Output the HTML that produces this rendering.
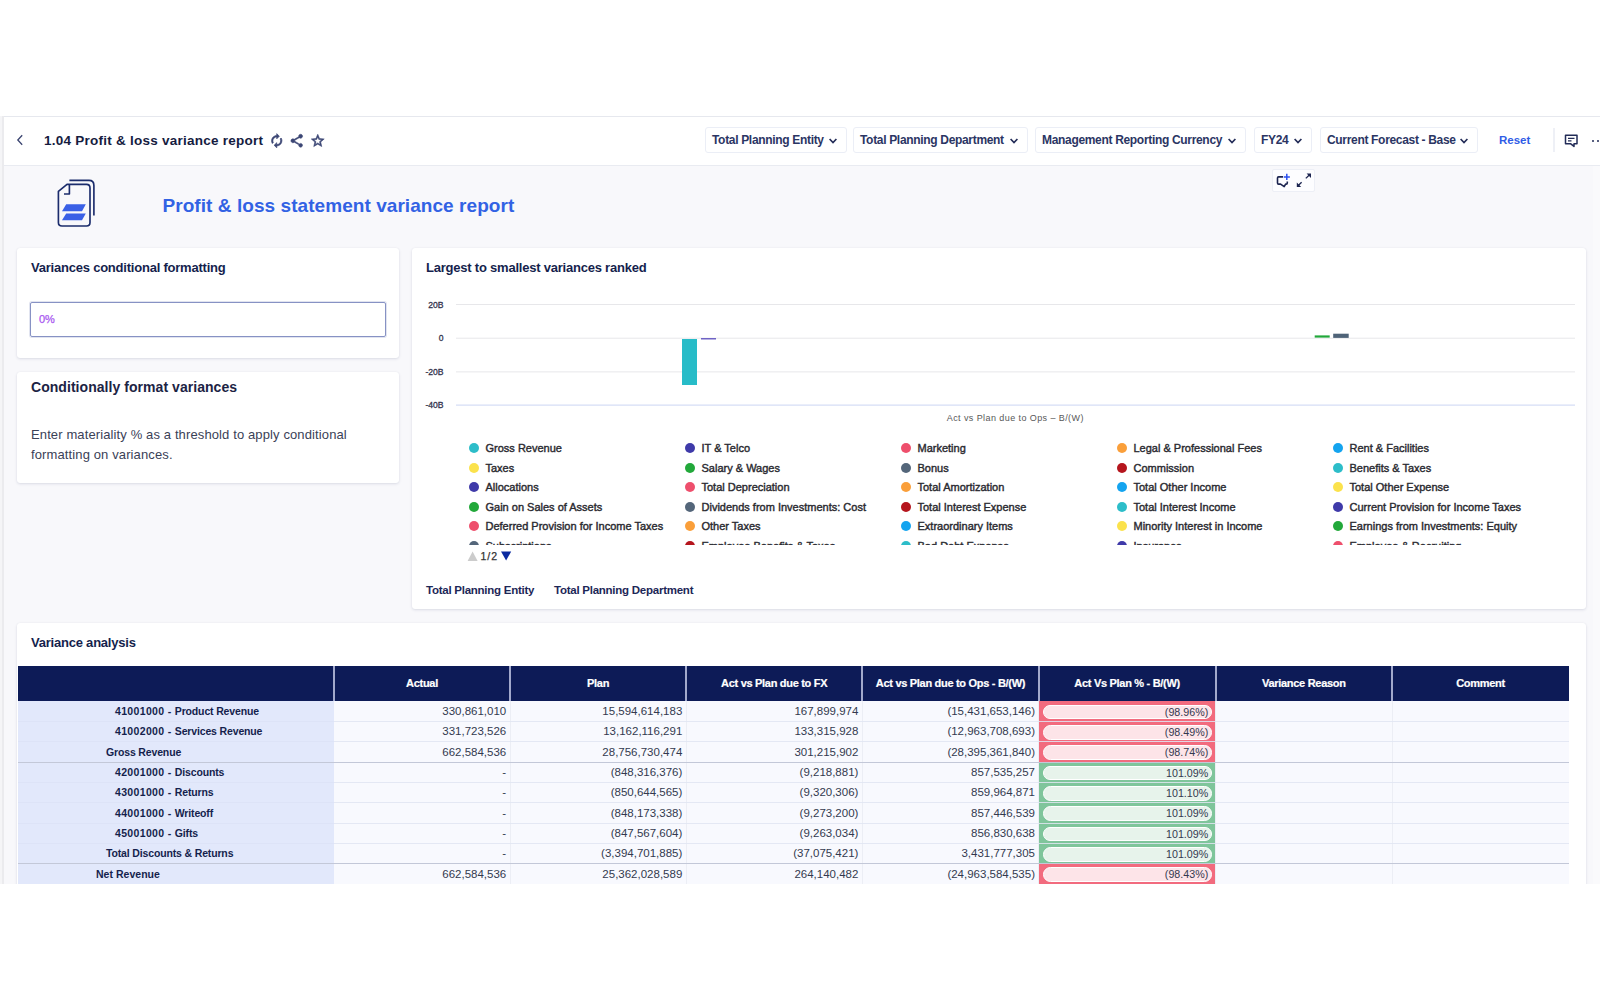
<!DOCTYPE html><html><head><meta charset="utf-8"><title>1.04 Profit &amp; loss variance report</title><style>
*{box-sizing:border-box;margin:0;padding:0}
html,body{width:1600px;height:1000px;overflow:hidden;background:#fff}
body{font-family:"Liberation Sans",sans-serif;color:#151f4d;position:relative}
.abs{position:absolute}
.t{position:absolute;white-space:nowrap;line-height:1}
#app{position:absolute;left:0;top:116px;width:1600px;height:768px;background:#f8f8fb;overflow:hidden}
#bar{position:absolute;left:0;top:0;width:1600px;height:50px;background:#fff;border-top:1px solid #e6e8ee;border-bottom:1px solid #e9ebf1}
#strip{position:absolute;left:0;top:0;width:4px;height:768px;z-index:5;background:linear-gradient(90deg,#f5f5f7 0,#f5f5f7 2px,#ebebee 2px,#ebebee 4px)}
.flt{position:absolute;top:10.4px;height:25.8px;border:1px solid #ebeef6;border-radius:3px;background:#fff;font-size:12px;font-weight:bold;color:#2b3563;line-height:25.4px;padding-left:6px;white-space:nowrap;letter-spacing:-.32px}
.card{position:absolute;background:#fff;border-radius:3px;box-shadow:0 1px 3px rgba(30,40,90,.13),0 0 1px rgba(30,40,90,.08)}
.ct{position:absolute;left:14px;font-weight:bold;font-size:13px;white-space:nowrap;line-height:1;color:#151f4d;letter-spacing:-.22px}
.lg{position:absolute;font-size:11px;color:#2a2a30;white-space:nowrap;line-height:1;-webkit-text-stroke:.4px #2a2a30}
.dot{position:absolute;width:10px;height:10px;border-radius:50%}
.th{position:absolute;top:0;height:35px;color:#fff;font-weight:bold;font-size:11px;text-align:center;line-height:34px;white-space:nowrap;letter-spacing:-.3px;-webkit-text-stroke:.2px #fff}
.rh{position:absolute;left:18px;width:316px;background:#e2e8fb;font-weight:bold;font-size:10.5px;line-height:21.4px;white-space:nowrap;color:#151f4d;letter-spacing:.03px}
.td{position:absolute;background:#f8f9fe;font-size:11.5px;text-align:right;padding-right:3.8px;line-height:20.6px;color:#33394f;white-space:nowrap}
.pill{position:absolute;left:4px;right:3.1px;top:3.8px;height:14.7px;border-radius:7.4px;border:1px solid #fff;font-size:10.7px;line-height:13.4px;text-align:right;padding-right:2.4px;color:#33394f}
</style></head><body>
<div id="app">
<div id="strip"></div>
<div class="abs" style="left:1593px;top:50px;width:7px;height:718px;background:#fafafc"></div>
<div id="bar">
<svg class="abs" style="left:16px;top:17px" width="8" height="12" viewBox="0 0 8 12"><path d="M6.2 1.2 L1.8 6 L6.2 10.8" fill="none" stroke="#3a4470" stroke-width="1.3"/></svg>
<div class="t" id="ttl" style="left:44px;top:17px;font-size:13.5px;font-weight:bold;color:#151c3f;letter-spacing:.25px">1.04 Profit &amp; loss variance report</div>
<svg class="abs" style="left:269px;top:15.8px" width="15.5" height="15.5" viewBox="0 0 24 24"><path fill="#3b4674" stroke="#3b4674" stroke-width="1.1" d="M12 6v3l4-4-4-4v3c-4.42 0-8 3.58-8 8 0 1.57.46 3.03 1.24 4.26L6.7 14.8c-.45-.83-.7-1.79-.7-2.8 0-3.31 2.69-6 6-6zm6.76 1.74L17.3 9.2c.44.84.7 1.79.7 2.8 0 3.31-2.69 6-6 6v-3l-4 4 4 4v-3c4.42 0 8-3.58 8-8 0-1.57-.46-3.03-1.24-4.26z"/></svg>
<svg class="abs" style="left:289.2px;top:15.5px" width="15.5" height="15.5" viewBox="0 0 24 24"><path fill="#3b4674" stroke="#3b4674" stroke-width=".9" d="M18 16.08c-.76 0-1.44.3-1.96.77L8.91 12.7c.05-.23.09-.46.09-.7s-.04-.47-.09-.7l7.05-4.11c.54.5 1.25.81 2.04.81 1.66 0 3-1.34 3-3s-1.34-3-3-3-3 1.34-3 3c0 .24.04.47.09.7L8.04 9.81C7.5 9.31 6.79 9 6 9c-1.66 0-3 1.34-3 3s1.34 3 3 3c.79 0 1.5-.31 2.04-.81l7.12 4.16c-.05.21-.08.43-.08.65 0 1.61 1.31 2.92 2.92 2.92 1.61 0 2.92-1.31 2.92-2.92s-1.31-2.92-2.92-2.92z"/></svg>
<svg class="abs" style="left:309.5px;top:15.8px" width="15.5" height="15.5" viewBox="0 0 24 24"><path fill="#3b4674" stroke="#3b4674" stroke-width=".9" d="M22 9.24l-7.19-.62L12 2 9.19 8.63 2 9.24l5.46 4.73L5.82 21 12 17.27 18.18 21l-1.63-7.03L22 9.24zM12 15.4l-3.76 2.27 1-4.28-3.32-2.88 4.38-.38L12 6.1l1.71 4.04 4.38.38-3.32 2.88 1 4.28L12 15.4z"/></svg>
<div class="flt" style="left:705px;width:142px">Total Planning Entity<svg style="position:absolute;right:9px;top:9.6px" width="8" height="6" viewBox="0 0 8 6"><path d="M0.6 1 L4 4.6 L7.4 1" fill="none" stroke="#232c58" stroke-width="1.7"/></svg></div>
<div class="flt" style="left:853px;width:175px">Total Planning Department<svg style="position:absolute;right:9px;top:9.6px" width="8" height="6" viewBox="0 0 8 6"><path d="M0.6 1 L4 4.6 L7.4 1" fill="none" stroke="#232c58" stroke-width="1.7"/></svg></div>
<div class="flt" style="left:1035px;width:211px">Management Reporting Currency<svg style="position:absolute;right:9px;top:9.6px" width="8" height="6" viewBox="0 0 8 6"><path d="M0.6 1 L4 4.6 L7.4 1" fill="none" stroke="#232c58" stroke-width="1.7"/></svg></div>
<div class="flt" style="left:1254px;width:58px">FY24<svg style="position:absolute;right:9px;top:9.6px" width="8" height="6" viewBox="0 0 8 6"><path d="M0.6 1 L4 4.6 L7.4 1" fill="none" stroke="#232c58" stroke-width="1.7"/></svg></div>
<div class="flt" style="left:1320px;width:158px">Current Forecast - Base<svg style="position:absolute;right:9px;top:9.6px" width="8" height="6" viewBox="0 0 8 6"><path d="M0.6 1 L4 4.6 L7.4 1" fill="none" stroke="#232c58" stroke-width="1.7"/></svg></div>
<div class="t" style="left:1499px;top:18px;font-size:11.5px;font-weight:bold;color:#2f5ce6">Reset</div>
<div class="abs" style="left:1552.6px;top:11px;width:2px;height:24px;background:#eef0f6"></div>
<svg class="abs" style="left:1564px;top:17px" width="15" height="14" viewBox="0 0 15 14"><path d="M1.5 1.2 H13 V9.8 H10 V12.4 L6.8 9.8 H1.5 Z" fill="none" stroke="#222c57" stroke-width="1.5" stroke-linejoin="round"/><path d="M4 4.3 H10.5 M4 6.8 H7.5" stroke="#222c57" stroke-width="1.3"/></svg>
<div class="abs" style="left:1592px;top:23px;width:2.4px;height:2.4px;border-radius:50%;background:#222c57"></div><div class="abs" style="left:1597px;top:23px;width:2.4px;height:2.4px;border-radius:50%;background:#222c57"></div>
</div>
<svg class="abs" style="left:50px;top:60px" width="50" height="56" viewBox="50 176 50 56"><g fill="none" stroke="#1b2c6c" stroke-width="1.65" stroke-linejoin="round" stroke-linecap="butt"><path d="M67 184.4 H86.5 Q90 184.4 90 188 V222.5 Q90 226 86.5 226 H62 Q58.4 226 58.4 222.5 V191.4 Z"/><path d="M69.4 184.4 V194 H64"/><path d="M69.4 180.4 H89 Q93.9 180.4 93.9 185.5 V215.6"/></g><path d="M66.2 204.3 H85.8 L82 211.2 H62 Z" fill="#3a60e6"/><path d="M66.2 213.5 H85.8 L82 220.3 H62 Z" fill="#3a60e6"/></svg>
<div class="t" id="h1" style="left:162.5px;top:79.8px;font-size:19px;font-weight:bold;color:#3262e4;letter-spacing:.06px">Profit &amp; loss statement variance report</div>
<div class="abs" style="left:1272.2px;top:53px;width:43px;height:22.5px;background:#fdfdff;border:1px solid #edeff6;border-radius:2px"></div>
<svg class="abs" style="left:1272px;top:54px" width="44" height="22" viewBox="1272 170 44 22"><path d="M1283 176.9 H1278.6 Q1277.5 176.9 1277.5 178 V183 Q1277.5 184.1 1278.6 184.1 H1280.6 L1284.2 186.6 L1285.6 184.1 H1286.2 Q1287.3 184.1 1287.3 183 V181.6" fill="none" stroke="#1c2450" stroke-width="1.6" stroke-linejoin="round"/><path d="M1286.8 173.8 V180 M1283.7 176.9 H1289.9" stroke="#2b50f0" stroke-width="1.5"/><g stroke="#1c2450" stroke-width="1.3" fill="none"><path d="M1305.8 178.4 L1309.6 174.8"/><path d="M1301.6 182.2 L1298 185.8"/></g><path d="M1306.6 173.6 H1311 V178 Z" fill="#1c2450"/><path d="M1296.8 182.6 V187 H1301.2 Z" fill="#1c2450"/></svg>
<div class="card" style="left:17px;top:131.5px;width:382.2px;height:110px"><div class="ct" style="top:13.5px">Variances conditional formatting</div><div class="abs" style="left:12.5px;top:54.8px;width:356.5px;height:34.6px;border:1px solid #8792c4;border-radius:2px;box-shadow:0 0 0 1px rgba(135,146,196,.25)"><div class="t" style="left:8.5px;top:10.6px;font-size:11px;color:#a855f0;-webkit-text-stroke:.25px #a855f0">0%</div></div></div>
<div class="card" style="left:17px;top:255.6px;width:382.2px;height:111.2px"><div class="t" style="left:14px;top:8.4px;font-size:14px;font-weight:bold;color:#1c2344;letter-spacing:.05px">Conditionally format variances</div><div class="abs" style="left:14px;top:53.4px;font-size:13px;line-height:19.8px;color:#3a4157;white-space:nowrap;letter-spacing:.12px">Enter materiality % as a threshold to apply conditional<br>formatting on variances.</div></div>
<div class="card" style="left:412px;top:131.5px;width:1173.6px;height:361.3px"><div class="ct" style="top:13.5px">Largest to smallest variances ranked</div></div>
<svg class="abs" style="left:412px;top:170px" width="1173" height="150" viewBox="412 286 1173 150" font-family="Liberation Sans, sans-serif">
<path d="M456 304.5 H1575" stroke="#e7e7ea" stroke-width="1"/>
<path d="M456 338.2 H1575" stroke="#e7e7ea" stroke-width="1"/>
<path d="M456 371.9 H1575" stroke="#e7e7ea" stroke-width="1"/>
<path d="M456 405.1 H1575" stroke="#ccd6f3" stroke-width="1"/>
<text x="443.6" y="307.7" text-anchor="end" font-size="8.6" fill="#33334d" stroke="#33334d" stroke-width=".3">20B</text>
<text x="443.6" y="341.3" text-anchor="end" font-size="8.6" fill="#33334d" stroke="#33334d" stroke-width=".3">0</text>
<text x="443.6" y="375" text-anchor="end" font-size="8.6" fill="#33334d" stroke="#33334d" stroke-width=".3">-20B</text>
<text x="443.6" y="408.2" text-anchor="end" font-size="8.6" fill="#33334d" stroke="#33334d" stroke-width=".3">-40B</text>
<rect x="682" y="339" width="15" height="46" fill="#27bcc8"/><rect x="701" y="338" width="15" height="1.5" fill="#6f63c5"/><rect x="1314.7" y="335.4" width="15" height="2.2" fill="#22a83a"/><rect x="1333.2" y="333.7" width="15.5" height="4.2" fill="#4f6378"/>
<text x="1015.3" y="420.8" text-anchor="middle" font-size="9" letter-spacing=".42" fill="#585858">Act vs Plan due to Ops – B/(W)</text>
</svg>
<div class="abs" style="left:412px;top:320px;width:1173px;height:109px;overflow:hidden">
<div class="dot" style="left:57.2px;top:7.2px;background:#2dbdc9"></div><div class="lg" style="left:73.5px;top:7.2px">Gross Revenue</div>
<div class="dot" style="left:273.2px;top:7.2px;background:#3f3aa9"></div><div class="lg" style="left:289.5px;top:7.2px">IT &amp; Telco</div>
<div class="dot" style="left:489.2px;top:7.2px;background:#ee4f6c"></div><div class="lg" style="left:505.5px;top:7.2px">Marketing</div>
<div class="dot" style="left:705.2px;top:7.2px;background:#fa9f3a"></div><div class="lg" style="left:721.5px;top:7.2px">Legal &amp; Professional Fees</div>
<div class="dot" style="left:921.2px;top:7.2px;background:#14a4ef"></div><div class="lg" style="left:937.5px;top:7.2px">Rent &amp; Facilities</div>
<div class="dot" style="left:57.2px;top:26.6px;background:#fbe24c"></div><div class="lg" style="left:73.5px;top:26.6px">Taxes</div>
<div class="dot" style="left:273.2px;top:26.6px;background:#22a83a"></div><div class="lg" style="left:289.5px;top:26.6px">Salary &amp; Wages</div>
<div class="dot" style="left:489.2px;top:26.6px;background:#54667a"></div><div class="lg" style="left:505.5px;top:26.6px">Bonus</div>
<div class="dot" style="left:705.2px;top:26.6px;background:#b5151d"></div><div class="lg" style="left:721.5px;top:26.6px">Commission</div>
<div class="dot" style="left:921.2px;top:26.6px;background:#2dbdc9"></div><div class="lg" style="left:937.5px;top:26.6px">Benefits &amp; Taxes</div>
<div class="dot" style="left:57.2px;top:46.1px;background:#3f3aa9"></div><div class="lg" style="left:73.5px;top:46.1px">Allocations</div>
<div class="dot" style="left:273.2px;top:46.1px;background:#ee4f6c"></div><div class="lg" style="left:289.5px;top:46.1px">Total Depreciation</div>
<div class="dot" style="left:489.2px;top:46.1px;background:#fa9f3a"></div><div class="lg" style="left:505.5px;top:46.1px">Total Amortization</div>
<div class="dot" style="left:705.2px;top:46.1px;background:#14a4ef"></div><div class="lg" style="left:721.5px;top:46.1px">Total Other Income</div>
<div class="dot" style="left:921.2px;top:46.1px;background:#fbe24c"></div><div class="lg" style="left:937.5px;top:46.1px">Total Other Expense</div>
<div class="dot" style="left:57.2px;top:65.5px;background:#22a83a"></div><div class="lg" style="left:73.5px;top:65.5px">Gain on Sales of Assets</div>
<div class="dot" style="left:273.2px;top:65.5px;background:#54667a"></div><div class="lg" style="left:289.5px;top:65.5px">Dividends from Investments: Cost</div>
<div class="dot" style="left:489.2px;top:65.5px;background:#b5151d"></div><div class="lg" style="left:505.5px;top:65.5px">Total Interest Expense</div>
<div class="dot" style="left:705.2px;top:65.5px;background:#2dbdc9"></div><div class="lg" style="left:721.5px;top:65.5px">Total Interest Income</div>
<div class="dot" style="left:921.2px;top:65.5px;background:#3f3aa9"></div><div class="lg" style="left:937.5px;top:65.5px">Current Provision for Income Taxes</div>
<div class="dot" style="left:57.2px;top:85.0px;background:#ee4f6c"></div><div class="lg" style="left:73.5px;top:85.0px">Deferred Provision for Income Taxes</div>
<div class="dot" style="left:273.2px;top:85.0px;background:#fa9f3a"></div><div class="lg" style="left:289.5px;top:85.0px">Other Taxes</div>
<div class="dot" style="left:489.2px;top:85.0px;background:#14a4ef"></div><div class="lg" style="left:505.5px;top:85.0px">Extraordinary Items</div>
<div class="dot" style="left:705.2px;top:85.0px;background:#fbe24c"></div><div class="lg" style="left:721.5px;top:85.0px">Minority Interest in Income</div>
<div class="dot" style="left:921.2px;top:85.0px;background:#22a83a"></div><div class="lg" style="left:937.5px;top:85.0px">Earnings from Investments: Equity</div>
<div class="dot" style="left:57.2px;top:104.5px;background:#54667a"></div><div class="lg" style="left:73.5px;top:104.5px">Subscriptions</div>
<div class="dot" style="left:273.2px;top:104.5px;background:#b5151d"></div><div class="lg" style="left:289.5px;top:104.5px">Employee Benefits &amp; Taxes</div>
<div class="dot" style="left:489.2px;top:104.5px;background:#2dbdc9"></div><div class="lg" style="left:505.5px;top:104.5px">Bad Debt Expense</div>
<div class="dot" style="left:705.2px;top:104.5px;background:#3f3aa9"></div><div class="lg" style="left:721.5px;top:104.5px">Insurance</div>
<div class="dot" style="left:921.2px;top:104.5px;background:#ee4f6c"></div><div class="lg" style="left:937.5px;top:104.5px">Employee &amp; Recruiting</div>
</div>
<svg class="abs" style="left:466px;top:434px" width="50" height="13" viewBox="466 550 50 13" font-family="Liberation Sans, sans-serif"><path d="M467.6 561 L472.6 551.6 L477.6 561 Z" fill="#cccccc"/><text x="480.4" y="559.6" font-size="10.5" fill="#333" letter-spacing="1.1" stroke="#333" stroke-width=".25">1/2</text><path d="M501 551.4 L511.2 551.4 L506.1 560.6 Z" fill="#0a2aa0"/></svg>
<div class="t" style="left:426px;top:468.5px;font-size:11.5px;font-weight:bold;color:#1d2757;letter-spacing:-.25px">Total Planning Entity</div>
<div class="t" style="left:554px;top:468.5px;font-size:11.5px;font-weight:bold;color:#1d2757;letter-spacing:-.25px">Total Planning Department</div>
<div class="card" style="left:17px;top:506.8px;width:1568.8px;height:280px;border-radius:3px 3px 0 0"><div class="ct" style="top:13.2px">Variance analysis</div></div>
<div class="abs" id="tbl" style="left:0;top:550px;width:1600px;height:218px;overflow:hidden">
<div class="abs" style="left:18px;top:0;width:1550.75px;height:34.9px;background:#0d1b57"></div>
<div class="abs" style="left:333px;top:0;width:2px;height:34.9px;background:#a2a9cc"></div>
<div class="th" style="left:334.00px;width:176.00px">Actual</div>
<div class="abs" style="left:509px;top:0;width:2px;height:34.9px;background:#a2a9cc"></div>
<div class="th" style="left:510.00px;width:176.10px">Plan</div>
<div class="abs" style="left:685px;top:0;width:2px;height:34.9px;background:#a2a9cc"></div>
<div class="th" style="left:686.10px;width:176.10px">Act vs Plan due to FX</div>
<div class="abs" style="left:861px;top:0;width:2px;height:34.9px;background:#a2a9cc"></div>
<div class="th" style="left:862.20px;width:176.60px">Act vs Plan due to Ops - B/(W)</div>
<div class="abs" style="left:1038px;top:0;width:2px;height:34.9px;background:#a2a9cc"></div>
<div class="th" style="left:1038.80px;width:176.70px">Act Vs Plan % - B/(W)</div>
<div class="abs" style="left:1215px;top:0;width:2px;height:34.9px;background:#a2a9cc"></div>
<div class="th" style="left:1215.50px;width:176.70px">Variance Reason</div>
<div class="abs" style="left:1391px;top:0;width:2px;height:34.9px;background:#a2a9cc"></div>
<div class="th" style="left:1392.20px;width:176.55px">Comment</div>
<div class="rh" style="top:34.90px;height:20.33px"><span style="position:absolute;left:97px"><span style="letter-spacing:.34px">41001000 - </span><span style="letter-spacing:-.15px">Product Revenue</span></span></div>
<div class="td" style="left:334.00px;top:34.90px;width:176.00px;height:20.33px">330,861,010</div>
<div class="td" style="left:510.00px;top:34.90px;width:176.10px;height:20.33px">15,594,614,183</div>
<div class="td" style="left:686.10px;top:34.90px;width:176.10px;height:20.33px">167,899,974</div>
<div class="td" style="left:862.20px;top:34.90px;width:176.60px;height:20.33px">(15,431,653,146)</div>
<div class="td" style="left:1039.10px;top:34.90px;width:175.60px;height:20.33px;background:#f26b7e"><div class="pill" style="background:#fde4e8">(98.96%)</div></div>
<div class="td" style="left:1215.50px;top:34.90px;width:176.70px;height:20.33px"></div>
<div class="td" style="left:1392.20px;top:34.90px;width:176.55px;height:20.33px"></div>
<div class="abs" style="left:18px;top:55.03px;width:316px;height:1px;background:#dde3f7;z-index:3"></div>
<div class="abs" style="left:334px;top:55.03px;width:1234.75px;height:1px;background:rgba(225,229,242,.85);z-index:3"></div>
<div class="rh" style="top:55.23px;height:20.33px"><span style="position:absolute;left:97px"><span style="letter-spacing:.34px">41002000 - </span><span style="letter-spacing:-.15px">Services Revenue</span></span></div>
<div class="td" style="left:334.00px;top:55.23px;width:176.00px;height:20.33px">331,723,526</div>
<div class="td" style="left:510.00px;top:55.23px;width:176.10px;height:20.33px">13,162,116,291</div>
<div class="td" style="left:686.10px;top:55.23px;width:176.10px;height:20.33px">133,315,928</div>
<div class="td" style="left:862.20px;top:55.23px;width:176.60px;height:20.33px">(12,963,708,693)</div>
<div class="td" style="left:1039.10px;top:55.23px;width:175.60px;height:20.33px;background:#f26b7e"><div class="pill" style="background:#fde4e8">(98.49%)</div></div>
<div class="td" style="left:1215.50px;top:55.23px;width:176.70px;height:20.33px"></div>
<div class="td" style="left:1392.20px;top:55.23px;width:176.55px;height:20.33px"></div>
<div class="abs" style="left:18px;top:75.36px;width:316px;height:1px;background:#dde3f7;z-index:3"></div>
<div class="abs" style="left:334px;top:75.36px;width:1234.75px;height:1px;background:rgba(225,229,242,.85);z-index:3"></div>
<div class="rh" style="top:75.56px;height:20.33px"><span style="position:absolute;left:88px"><span style="letter-spacing:-.15px">Gross Revenue</span></span></div>
<div class="td" style="left:334.00px;top:75.56px;width:176.00px;height:20.33px">662,584,536</div>
<div class="td" style="left:510.00px;top:75.56px;width:176.10px;height:20.33px">28,756,730,474</div>
<div class="td" style="left:686.10px;top:75.56px;width:176.10px;height:20.33px">301,215,902</div>
<div class="td" style="left:862.20px;top:75.56px;width:176.60px;height:20.33px">(28,395,361,840)</div>
<div class="td" style="left:1039.10px;top:75.56px;width:175.60px;height:20.33px;background:#f26b7e"><div class="pill" style="background:#fde4e8">(98.74%)</div></div>
<div class="td" style="left:1215.50px;top:75.56px;width:176.70px;height:20.33px"></div>
<div class="td" style="left:1392.20px;top:75.56px;width:176.55px;height:20.33px"></div>
<div class="abs" style="left:18px;top:96px;width:1550.75px;height:1px;background:#c3c8d8;z-index:3"></div>
<div class="rh" style="top:95.89px;height:20.33px"><span style="position:absolute;left:97px"><span style="letter-spacing:.34px">42001000 - </span><span style="letter-spacing:-.15px">Discounts</span></span></div>
<div class="td" style="left:334.00px;top:95.89px;width:176.00px;height:20.33px">-</div>
<div class="td" style="left:510.00px;top:95.89px;width:176.10px;height:20.33px">(848,316,376)</div>
<div class="td" style="left:686.10px;top:95.89px;width:176.10px;height:20.33px">(9,218,881)</div>
<div class="td" style="left:862.20px;top:95.89px;width:176.60px;height:20.33px">857,535,257</div>
<div class="td" style="left:1039.10px;top:95.89px;width:175.60px;height:20.33px;background:#7fc59b"><div class="pill" style="background:#e7f3eb">101.09%</div></div>
<div class="td" style="left:1215.50px;top:95.89px;width:176.70px;height:20.33px"></div>
<div class="td" style="left:1392.20px;top:95.89px;width:176.55px;height:20.33px"></div>
<div class="abs" style="left:18px;top:116.02px;width:316px;height:1px;background:#dde3f7;z-index:3"></div>
<div class="abs" style="left:334px;top:116.02px;width:1234.75px;height:1px;background:rgba(225,229,242,.85);z-index:3"></div>
<div class="rh" style="top:116.22px;height:20.33px"><span style="position:absolute;left:97px"><span style="letter-spacing:.34px">43001000 - </span><span style="letter-spacing:-.15px">Returns</span></span></div>
<div class="td" style="left:334.00px;top:116.22px;width:176.00px;height:20.33px">-</div>
<div class="td" style="left:510.00px;top:116.22px;width:176.10px;height:20.33px">(850,644,565)</div>
<div class="td" style="left:686.10px;top:116.22px;width:176.10px;height:20.33px">(9,320,306)</div>
<div class="td" style="left:862.20px;top:116.22px;width:176.60px;height:20.33px">859,964,871</div>
<div class="td" style="left:1039.10px;top:116.22px;width:175.60px;height:20.33px;background:#7fc59b"><div class="pill" style="background:#e7f3eb">101.10%</div></div>
<div class="td" style="left:1215.50px;top:116.22px;width:176.70px;height:20.33px"></div>
<div class="td" style="left:1392.20px;top:116.22px;width:176.55px;height:20.33px"></div>
<div class="abs" style="left:18px;top:136.35px;width:316px;height:1px;background:#dde3f7;z-index:3"></div>
<div class="abs" style="left:334px;top:136.35px;width:1234.75px;height:1px;background:rgba(225,229,242,.85);z-index:3"></div>
<div class="rh" style="top:136.55px;height:20.33px"><span style="position:absolute;left:97px"><span style="letter-spacing:.34px">44001000 - </span><span style="letter-spacing:-.15px">Writeoff</span></span></div>
<div class="td" style="left:334.00px;top:136.55px;width:176.00px;height:20.33px">-</div>
<div class="td" style="left:510.00px;top:136.55px;width:176.10px;height:20.33px">(848,173,338)</div>
<div class="td" style="left:686.10px;top:136.55px;width:176.10px;height:20.33px">(9,273,200)</div>
<div class="td" style="left:862.20px;top:136.55px;width:176.60px;height:20.33px">857,446,539</div>
<div class="td" style="left:1039.10px;top:136.55px;width:175.60px;height:20.33px;background:#7fc59b"><div class="pill" style="background:#e7f3eb">101.09%</div></div>
<div class="td" style="left:1215.50px;top:136.55px;width:176.70px;height:20.33px"></div>
<div class="td" style="left:1392.20px;top:136.55px;width:176.55px;height:20.33px"></div>
<div class="abs" style="left:18px;top:156.68px;width:316px;height:1px;background:#dde3f7;z-index:3"></div>
<div class="abs" style="left:334px;top:156.68px;width:1234.75px;height:1px;background:rgba(225,229,242,.85);z-index:3"></div>
<div class="rh" style="top:156.88px;height:20.33px"><span style="position:absolute;left:97px"><span style="letter-spacing:.34px">45001000 - </span><span style="letter-spacing:-.15px">Gifts</span></span></div>
<div class="td" style="left:334.00px;top:156.88px;width:176.00px;height:20.33px">-</div>
<div class="td" style="left:510.00px;top:156.88px;width:176.10px;height:20.33px">(847,567,604)</div>
<div class="td" style="left:686.10px;top:156.88px;width:176.10px;height:20.33px">(9,263,034)</div>
<div class="td" style="left:862.20px;top:156.88px;width:176.60px;height:20.33px">856,830,638</div>
<div class="td" style="left:1039.10px;top:156.88px;width:175.60px;height:20.33px;background:#7fc59b"><div class="pill" style="background:#e7f3eb">101.09%</div></div>
<div class="td" style="left:1215.50px;top:156.88px;width:176.70px;height:20.33px"></div>
<div class="td" style="left:1392.20px;top:156.88px;width:176.55px;height:20.33px"></div>
<div class="abs" style="left:18px;top:177.01px;width:316px;height:1px;background:#dde3f7;z-index:3"></div>
<div class="abs" style="left:334px;top:177.01px;width:1234.75px;height:1px;background:rgba(225,229,242,.85);z-index:3"></div>
<div class="rh" style="top:177.21px;height:20.33px"><span style="position:absolute;left:88px"><span style="letter-spacing:-.15px">Total Discounts &amp; Returns</span></span></div>
<div class="td" style="left:334.00px;top:177.21px;width:176.00px;height:20.33px">-</div>
<div class="td" style="left:510.00px;top:177.21px;width:176.10px;height:20.33px">(3,394,701,885)</div>
<div class="td" style="left:686.10px;top:177.21px;width:176.10px;height:20.33px">(37,075,421)</div>
<div class="td" style="left:862.20px;top:177.21px;width:176.60px;height:20.33px">3,431,777,305</div>
<div class="td" style="left:1039.10px;top:177.21px;width:175.60px;height:20.33px;background:#7fc59b"><div class="pill" style="background:#e7f3eb">101.09%</div></div>
<div class="td" style="left:1215.50px;top:177.21px;width:176.70px;height:20.33px"></div>
<div class="td" style="left:1392.20px;top:177.21px;width:176.55px;height:20.33px"></div>
<div class="abs" style="left:18px;top:197px;width:1550.75px;height:1px;background:#c3c8d8;z-index:3"></div>
<div class="rh" style="top:197.54px;height:20.33px"><span style="position:absolute;left:78px">Net Revenue</span></div>
<div class="td" style="left:334.00px;top:197.54px;width:176.00px;height:20.33px">662,584,536</div>
<div class="td" style="left:510.00px;top:197.54px;width:176.10px;height:20.33px">25,362,028,589</div>
<div class="td" style="left:686.10px;top:197.54px;width:176.10px;height:20.33px">264,140,482</div>
<div class="td" style="left:862.20px;top:197.54px;width:176.60px;height:20.33px">(24,963,584,535)</div>
<div class="td" style="left:1039.10px;top:197.54px;width:175.60px;height:20.33px;background:#f26b7e"><div class="pill" style="background:#fde4e8">(98.43%)</div></div>
<div class="td" style="left:1215.50px;top:197.54px;width:176.70px;height:20.33px"></div>
<div class="td" style="left:1392.20px;top:197.54px;width:176.55px;height:20.33px"></div>
<div class="abs" style="left:18px;top:217.67px;width:316px;height:1px;background:#dde3f7;z-index:3"></div>
<div class="abs" style="left:334px;top:217.67px;width:1234.75px;height:1px;background:rgba(225,229,242,.85);z-index:3"></div>
<div class="abs" style="left:509.50px;top:34.9px;width:1px;height:184px;background:#eceef5;z-index:2"></div>
<div class="abs" style="left:685.60px;top:34.9px;width:1px;height:184px;background:#eceef5;z-index:2"></div>
<div class="abs" style="left:861.70px;top:34.9px;width:1px;height:184px;background:#eceef5;z-index:2"></div>
<div class="abs" style="left:1038.30px;top:34.9px;width:1px;height:184px;background:#eceef5;z-index:2"></div>
<div class="abs" style="left:1215.00px;top:34.9px;width:1px;height:184px;background:#eceef5;z-index:2"></div>
<div class="abs" style="left:1391.70px;top:34.9px;width:1px;height:184px;background:#eceef5;z-index:2"></div>
</div>
</div></body></html>
